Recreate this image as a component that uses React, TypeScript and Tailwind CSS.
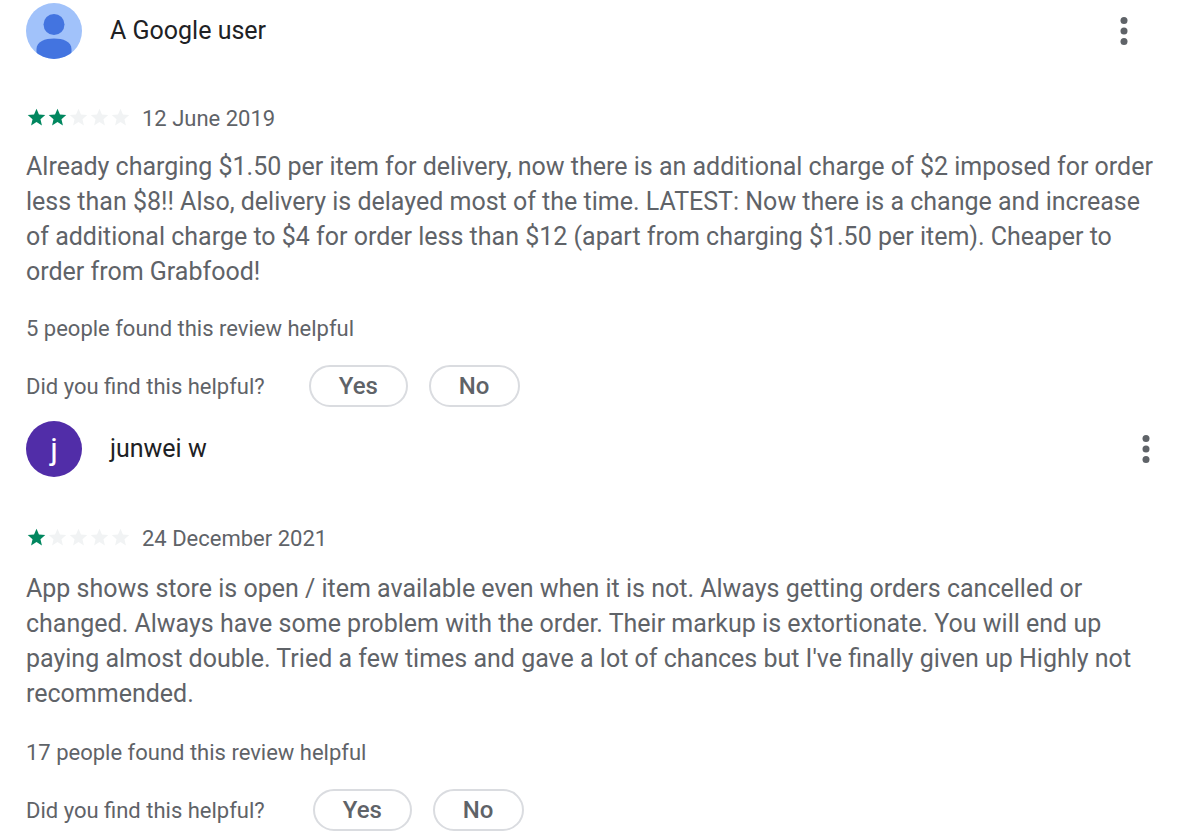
import React from 'react';
import clsx from 'clsx';

interface Review {
  id: string;
  author: string;
  rating: number;
  date: string;
  text: string;
  helpful: string;
}

const reviews: Review[] = [
  {
    id: 'google-user',
    author: 'A Google user',
    rating: 2,
    date: '12 June 2019',
    text: 'Already charging $1.50 per item for delivery, now there is an additional charge of $2 imposed for order less than $8!! Also, delivery is delayed most of the time. LATEST: Now there is a change and increase of additional charge to $4 for order less than $12 (apart from charging $1.50 per item). Cheaper to order from Grabfood!',
    helpful: '5 people found this review helpful',
  },
  {
    id: 'junwei',
    author: 'junwei w',
    rating: 1,
    date: '24 December 2021',
    text: "App shows store is open / item available even when it is not. Always getting orders cancelled or changed. Always have some problem with the order. Their markup is extortionate. You will end up paying almost double. Tried a few times and gave a lot of chances but I've finally given up Highly not recommended.",
    helpful: '17 people found this review helpful',
  },
];

const GoogleAvatar = () => (
  <svg viewBox="0 0 56 56" className="h-14 w-14 shrink-0" aria-hidden="true">
    <defs>
      <clipPath id="avatar-clip">
        <circle cx="28" cy="28" r="28" />
      </clipPath>
    </defs>
    <g clipPath="url(#avatar-clip)">
      <rect width="56" height="56" fill="#a1c2fa" />
      <circle cx="28" cy="21.5" r="10.5" fill="#4374e0" />
      <path d="M10.5 56V46C10.5 38.5 19 35.5 28 35.5S45.5 38.5 45.5 46V56z" fill="#4374e0" />
    </g>
  </svg>
);

const LetterAvatar = ({ letter }: { letter: string }) => (
  <div className="flex h-14 w-14 shrink-0 items-center justify-center rounded-full bg-[#512da8] text-[32px] leading-none text-white">
    {letter}
  </div>
);

const Stars = ({ rating }: { rating: number }) => (
  <div className="flex" role="img" aria-label={`Rated ${rating} stars out of five stars`}>
    {[1, 2, 3, 4, 5].map(n => (
      <svg
        key={n}
        viewBox="0 0 24 24"
        className={clsx('h-[21px] w-[21px]', n <= rating ? 'fill-[#01875f]' : 'fill-[#f1f3f4]')}
      >
        <path d="M12 17.27L18.18 21l-1.64-7.03L22 9.24l-7.19-.61L12 2 9.19 8.63 2 9.24l5.46 4.73L5.82 21z" />
      </svg>
    ))}
  </div>
);

const VoteButton = ({ label }: { label: string }) => (
  <button
    type="button"
    className="h-[42px] rounded-full border-2 border-[#dadce0] px-7 text-2xl leading-none font-medium text-[#5f6368]"
  >
    {label}
  </button>
);

const ReviewCard = ({ review }: { review: Review }) => {
  // reviews without a profile are laid out a little tighter
  const isAnonymous = review.author === 'A Google user';

  return (
    <article>
      <header className={clsx('flex items-center', isAnonymous ? 'pr-9' : 'pr-[14px]')}>
        {isAnonymous ? <GoogleAvatar /> : <LetterAvatar letter={review.author[0]} />}
        <h2 className="ml-7 text-[25px] text-[#202124]">{review.author}</h2>
        <button type="button" aria-label="More options" className="ml-auto">
          <svg viewBox="0 0 8 28" className="h-7 w-2 fill-[#5f6368]">
            <circle cx="4" cy="3.5" r="3.5" />
            <circle cx="4" cy="14" r="3.5" />
            <circle cx="4" cy="24.5" r="3.5" />
          </svg>
        </button>
      </header>

      <div className={clsx('flex items-start gap-[11px]', isAnonymous ? 'mt-12' : 'mt-[50px]')}>
        <Stars rating={review.rating} />
        <span className="text-[22px] leading-6 text-[#5f6368]">{review.date}</span>
      </div>

      <p className={clsx('text-[25px] leading-[35px] text-[#5f6368]', isAnonymous ? 'mt-[18px]' : 'mt-5')}>
        {review.text}
      </p>

      <p className={clsx('text-[22px] leading-8 text-[#5f6368]', isAnonymous ? 'mt-6' : 'mt-[26px]')}>
        {review.helpful}
      </p>

      <div className="mt-5 flex items-center text-[#5f6368]">
        <span className="text-[22px]">Did you find this helpful?</span>
        <div className={clsx('flex gap-[21px]', isAnonymous ? 'ml-11' : 'ml-12')}>
          <VoteButton label="Yes" />
          <VoteButton label="No" />
        </div>
      </div>
    </article>
  );
};

const App: React.FC = () => {
  return (
    <main className="flex flex-col gap-[14px] bg-white pt-[3px] pr-9 pl-[26px] font-[Roboto,sans-serif]">
      {reviews.map(review => (
        <ReviewCard key={review.id} review={review} />
      ))}
    </main>
  );
};

export default App;
